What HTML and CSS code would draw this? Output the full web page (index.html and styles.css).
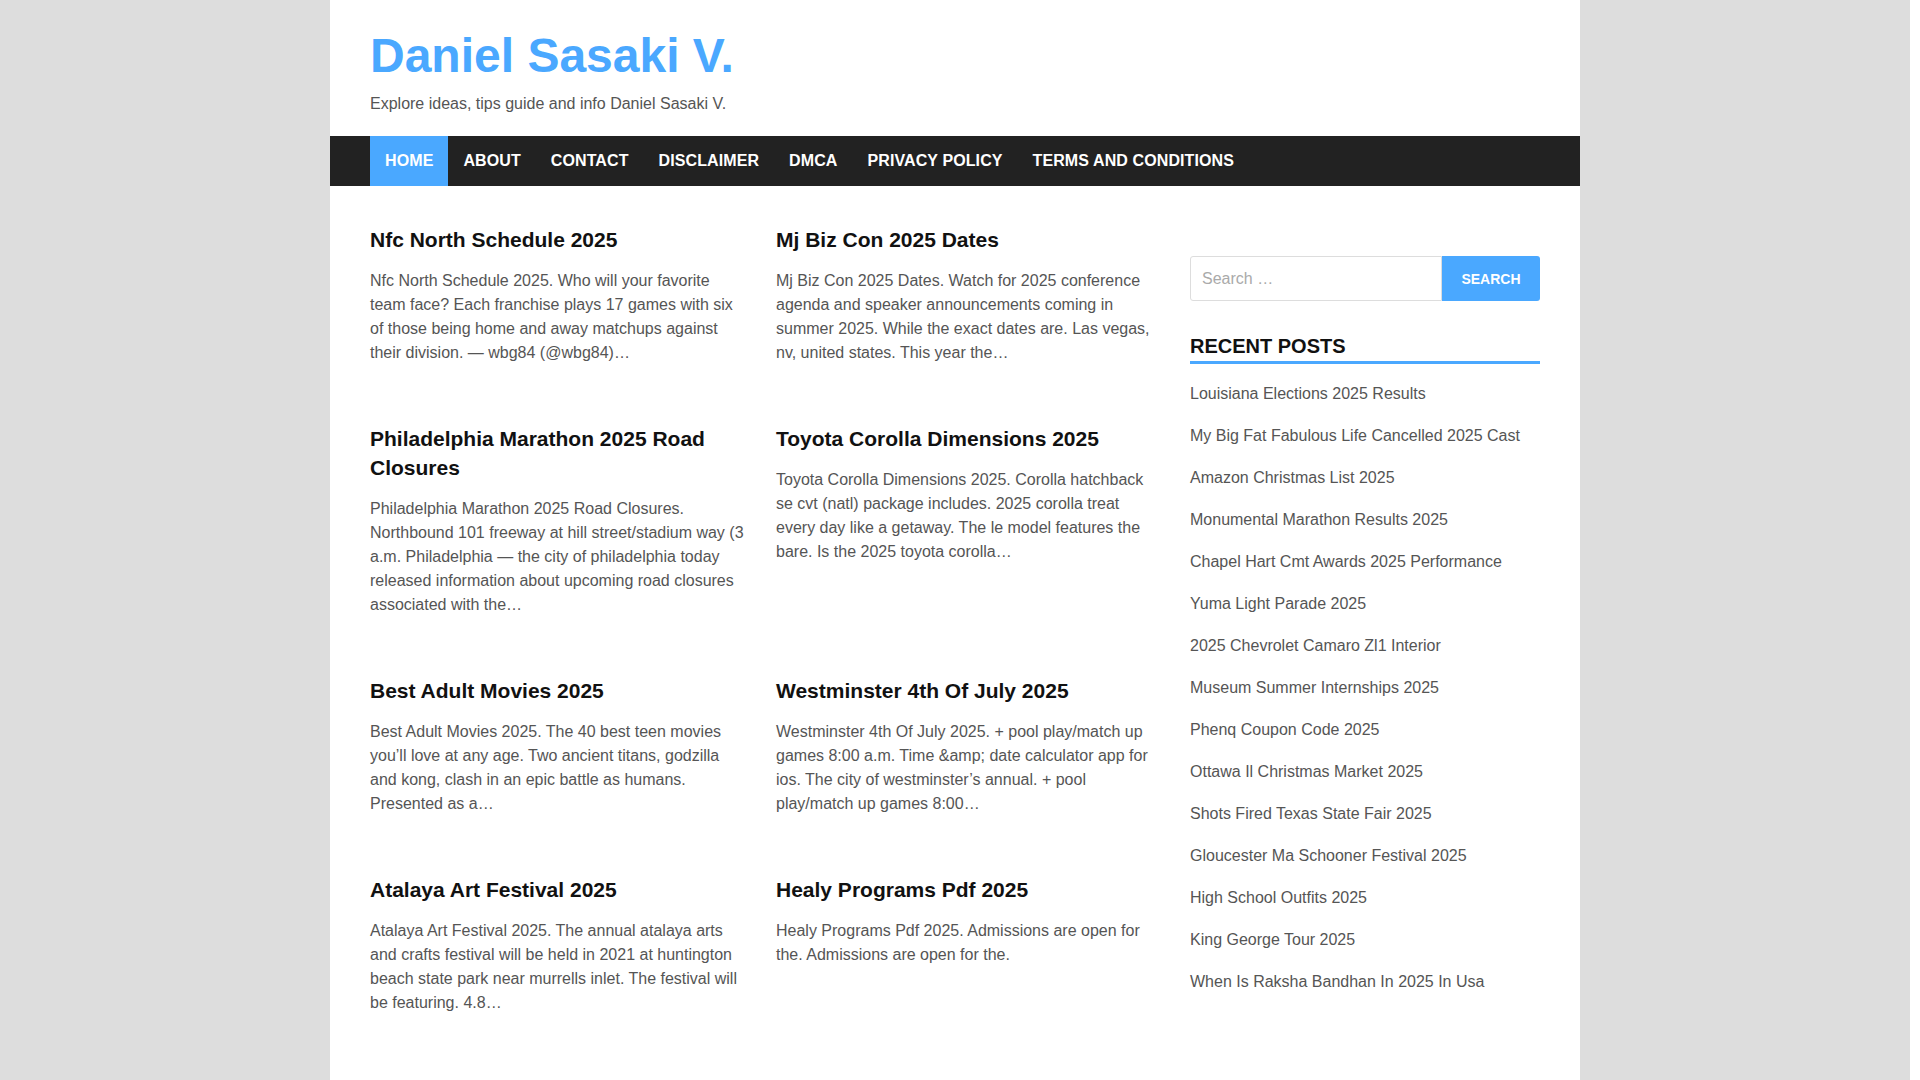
FILE: index.html
```html
<!DOCTYPE html>
<html lang="en">

<head>
    <meta charset="UTF-8">
    <meta name="viewport" content="width=device-width, initial-scale=1.0">
    <title>Daniel Sasaki V.</title>
    <link rel="stylesheet" href="styles.css">
</head>

<body>
    <div class="page">
        <header class="site-header">
            <h1 class="site-title"><a href="#">Daniel Sasaki V.</a></h1>
            <p class="site-description">Explore ideas, tips guide and info Daniel Sasaki V.</p>
        </header>

        <nav class="main-nav">
            <ul>
                <li class="current"><a href="#">Home</a></li>
                <li><a href="#">About</a></li>
                <li><a href="#">Contact</a></li>
                <li><a href="#">Disclaimer</a></li>
                <li><a href="#">DMCA</a></li>
                <li><a href="#">Privacy Policy</a></li>
                <li><a href="#">Terms and Conditions</a></li>
            </ul>
        </nav>

        <div class="site-content">
            <main class="posts">
                <article class="post">
                    <h2 class="post-title"><a href="#">Nfc North Schedule 2025</a></h2>
                    <p class="post-excerpt">Nfc North Schedule 2025. Who will your favorite team face? Each franchise plays 17 games with six of those being home and away matchups against their division. — wbg84 (@wbg84)…</p>
                </article>
                <article class="post">
                    <h2 class="post-title"><a href="#">Mj Biz Con 2025 Dates</a></h2>
                    <p class="post-excerpt">Mj Biz Con 2025 Dates. Watch for 2025 conference agenda and speaker announcements coming in summer 2025. While the exact dates are. Las vegas, nv, united states. This year the…</p>
                </article>
                <article class="post">
                    <h2 class="post-title"><a href="#">Philadelphia Marathon 2025 Road Closures</a></h2>
                    <p class="post-excerpt">Philadelphia Marathon 2025 Road Closures. Northbound 101 freeway at hill street/stadium way (3 a.m. Philadelphia — the city of philadelphia today released information about upcoming road closures associated with the…</p>
                </article>
                <article class="post">
                    <h2 class="post-title"><a href="#">Toyota Corolla Dimensions 2025</a></h2>
                    <p class="post-excerpt">Toyota Corolla Dimensions 2025. Corolla hatchback se cvt (natl) package includes. 2025 corolla treat every day like a getaway. The le model features the bare. Is the 2025 toyota corolla…</p>
                </article>
                <article class="post">
                    <h2 class="post-title"><a href="#">Best Adult Movies 2025</a></h2>
                    <p class="post-excerpt">Best Adult Movies 2025. The 40 best teen movies you’ll love at any age. Two ancient titans, godzilla and kong, clash in an epic battle as humans. Presented as a…</p>
                </article>
                <article class="post">
                    <h2 class="post-title"><a href="#">Westminster 4th Of July 2025</a></h2>
                    <p class="post-excerpt">Westminster 4th Of July 2025. + pool play/match up games 8:00 a.m. Time &amp;amp; date calculator app for ios. The city of westminster’s annual. + pool play/match up games 8:00…</p>
                </article>
                <article class="post">
                    <h2 class="post-title"><a href="#">Atalaya Art Festival 2025</a></h2>
                    <p class="post-excerpt">Atalaya Art Festival 2025. The annual atalaya arts and crafts festival will be held in 2021 at huntington beach state park near murrells inlet. The festival will be featuring. 4.8…</p>
                </article>
                <article class="post">
                    <h2 class="post-title"><a href="#">Healy Programs Pdf 2025</a></h2>
                    <p class="post-excerpt">Healy Programs Pdf 2025. Admissions are open for the. Admissions are open for the.</p>
                </article>
            </main>

            <aside class="sidebar">
                <form class="search-form">
                    <input type="search" class="search-field" placeholder="Search …">
                    <button type="submit" class="search-submit">Search</button>
                </form>

                <section class="widget">
                    <h2 class="widget-title">Recent Posts</h2>
                    <ul class="recent-posts">
                        <li><a href="#">Louisiana Elections 2025 Results</a></li>
                        <li><a href="#">My Big Fat Fabulous Life Cancelled 2025 Cast</a></li>
                        <li><a href="#">Amazon Christmas List 2025</a></li>
                        <li><a href="#">Monumental Marathon Results 2025</a></li>
                        <li><a href="#">Chapel Hart Cmt Awards 2025 Performance</a></li>
                        <li><a href="#">Yuma Light Parade 2025</a></li>
                        <li><a href="#">2025 Chevrolet Camaro Zl1 Interior</a></li>
                        <li><a href="#">Museum Summer Internships 2025</a></li>
                        <li><a href="#">Phenq Coupon Code 2025</a></li>
                        <li><a href="#">Ottawa Il Christmas Market 2025</a></li>
                        <li><a href="#">Shots Fired Texas State Fair 2025</a></li>
                        <li><a href="#">Gloucester Ma Schooner Festival 2025</a></li>
                        <li><a href="#">High School Outfits 2025</a></li>
                        <li><a href="#">King George Tour 2025</a></li>
                        <li><a href="#">When Is Raksha Bandhan In 2025 In Usa</a></li>
                    </ul>
                </section>
            </aside>
        </div>

        <footer class="site-footer">
            <p>Copyright © 2025 Daniel Sasaki V.</p>
        </footer>
    </div>
</body>

</html>
```

FILE: styles.css
```css
body {
    margin: 0;
    border-right: 10px solid #fff;
    background-color: #ddd;
    font-family: "Liberation Sans", Arial, sans-serif;
    font-size: 16px;
    line-height: 24px;
    color: #555;
}

a {
    text-decoration: none;
    color: inherit;
}

.page {
    width: 1250px;
    margin: 0 auto;
    background-color: #fff;
}

.site-header {
    padding: 27px 40px 20px;
}

.site-title {
    margin: 0;
    font-size: 48px;
    line-height: 58px;
    font-weight: bold;
    color: #4aa8ff;
}

.site-description {
    margin: 7px 0 0;
    color: #555;
}

.main-nav {
    background-color: #222;
    padding: 0 40px;
}

.main-nav ul {
    display: flex;
    margin: 0;
    padding: 0;
    list-style: none;
}

.main-nav a {
    display: block;
    padding: 0 15px;
    line-height: 50px;
    font-weight: bold;
    letter-spacing: 0.1px;
    text-transform: uppercase;
    color: #fff;
}

.main-nav .current a {
    background-color: #4aa8ff;
}

.site-content {
    display: flex;
    justify-content: space-between;
    padding: 40px 40px 0;
}

.posts {
    display: grid;
    grid-template-columns: 375px 375px;
    column-gap: 31px;
    align-content: start;
    width: 781px;
}

.post {
    margin-bottom: 60px;
}

.post-title {
    margin: 0 0 14.5px;
    font-size: 21px;
    line-height: 28.5px;
    color: #111;
}

.post-excerpt {
    margin: 0;
}

.sidebar {
    width: 350px;
    padding-top: 30px;
}

.search-form {
    display: flex;
    height: 45px;
}

.search-field {
    flex: 1;
    min-width: 0;
    margin: 0;
    padding: 0 11px;
    border: 1px solid #ddd;
    border-radius: 3px 0 0 3px;
    font-family: inherit;
    font-size: 16px;
    color: #555;
}

.search-field::placeholder {
    color: #aaa;
}

.search-submit {
    width: 98px;
    border: none;
    border-radius: 0 3px 3px 0;
    background-color: #4aa8ff;
    color: #fff;
    font-family: inherit;
    font-size: 14px;
    font-weight: bold;
    text-transform: uppercase;
}

.widget {
    margin-top: 31px;
}

.widget-title {
    margin: 0;
    padding-bottom: 1px;
    border-bottom: 3px solid #4aa8ff;
    font-size: 20px;
    line-height: 28px;
    text-transform: uppercase;
    color: #111;
}

.recent-posts {
    margin: 9px 0 0;
    padding: 0;
    list-style: none;
}

.recent-posts li {
    padding: 9px 0;
}

.site-footer {
    margin-top: 40px;
    padding: 30px 40px 280px;
    border-top: 1px solid #eee;
    font-size: 14px;
}

.site-footer p {
    margin: 0;
}
```
